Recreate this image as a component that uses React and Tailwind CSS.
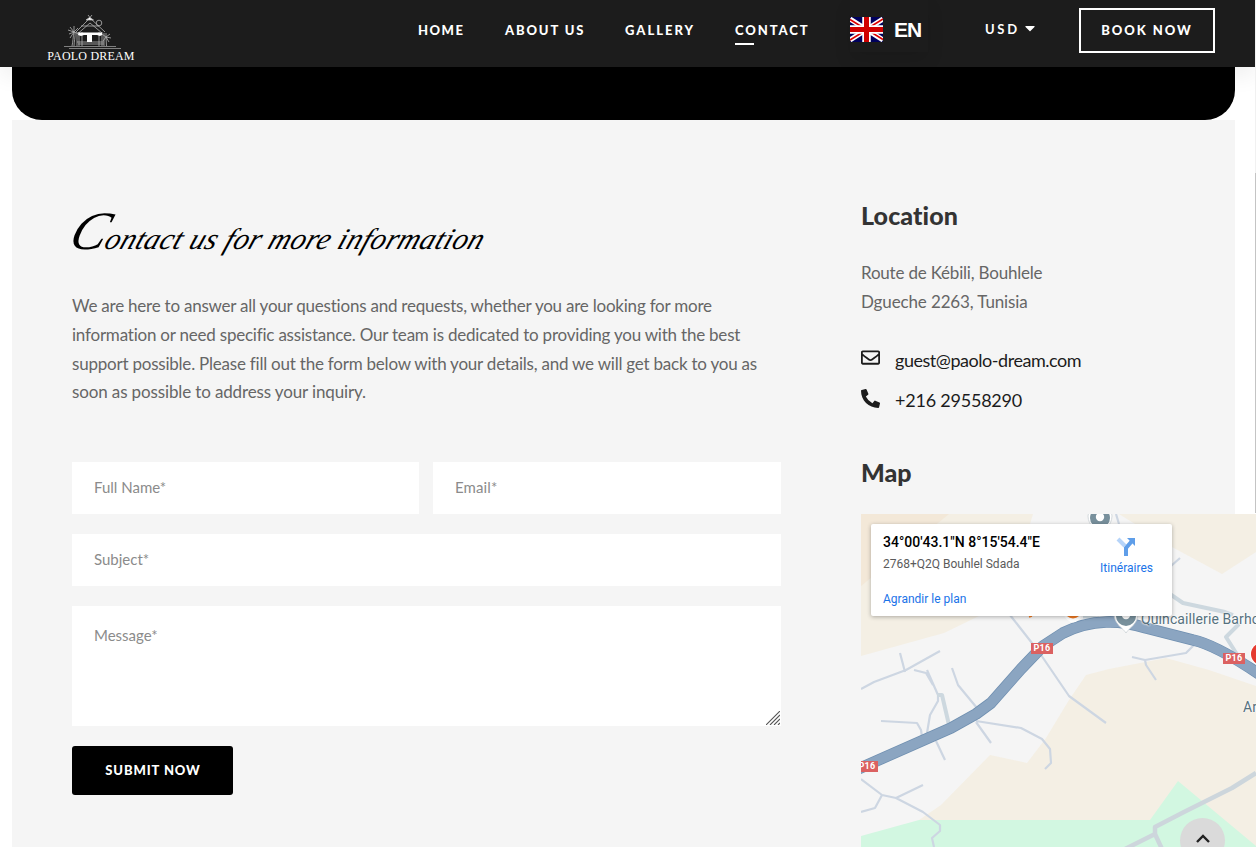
import React from "react";
import { FaRegEnvelope, FaPhoneAlt, FaCaretDown } from "react-icons/fa";

const navItems = [
  { label: "HOME", box: "w-[87px]", track: "tracking-[1.5px]" },
  { label: "ABOUT US", box: "w-[120px]", track: "tracking-[1.85px]" },
  { label: "GALLERY", box: "w-[110px]", track: "tracking-[2px]" },
  { label: "CONTACT", box: "w-[115px]", track: "tracking-[1.9px]", active: true },
];

const intro = [
  { text: "We are here to answer all your questions and requests, whether you are looking for more", track: "tracking-[-0.222px]" },
  { text: "information or need specific assistance. Our team is dedicated to providing you with the best", track: "tracking-[-0.215px]" },
  { text: "support possible. Please fill out the form below with your details, and we will get back to you as", track: "tracking-[-0.22px]" },
  { text: "soon as possible to address your inquiry.", track: "tracking-[-0.13px]" },
];

function Logo() {
  return (
    <div className="ml-[47px] mt-[14px] flex w-[88px] flex-col items-center">
      <svg className="h-[36px] w-[60px]" viewBox="0 0 60 36" fill="none" stroke="#b5b5b5" strokeWidth="0.8">
        <path d="M15 18 L29 4 L44 18 M17.500 19 L29 9 L41 19 M20 12 H38 M27 1 L31 6 M31 1 L27 6" />
        <path d="M25 6 L28.500 3.500 L32.500 6Z" fill="#fff" />
        <circle cx="38" cy="9" r="2.800" />
        <path d="M16 18 V32 M18 18 V32 M21 18 V32 M38 18 V32 M41 18 V32 M43 19 V32 M16 28 H43 M17 30 H43" />
        <path d="M17 18.500 H41 V21 L39 22 L36 21 H31 V28 H26 V21 H23 L20 22 L17 21Z" fill="#fff" stroke="none" />
        <path d="M13 18 C12 23 12 28 11 32 M14 18 C14.500 23 13 28 13 32 M13 18 L7 16 M13 18 L8 20 M13 18 L9 24 M13 18 L13 12 M13 18 L17 14 M13 18 L18 20 M13 18 L9 13" />
        <path d="M45 23 L45.500 32 M45 23 L41 20 M45 23 L49 20 M45 23 L50 24 M45 23 L48 28 M45 23 L42 27 M45 23 L45 19" />
        <path d="M3 32.500 H55 M8 34.500 H60" stroke="#999" />
      </svg>
      <span className="whitespace-nowrap font-['Liberation_Serif',serif] text-[12px] leading-[12px] tracking-[0.2px] text-white">
        PAOLO DREAM
      </span>
    </div>
  );
}

function Flag() {
  return (
    <svg className="h-[25px] w-[33px]" viewBox="0 0 33 25" preserveAspectRatio="none">
      <rect width="33" height="25" fill="#00005c" />
      <path d="M0 2 L33 23 M33 2 L0 23" stroke="#fff" strokeWidth="5" />
      <path d="M0 2.500 L13 10.500 M33 2 L20 10 M0 23 L13 15 M33 22.500 L20 14.500" stroke="#d00" strokeWidth="1.500" />
      <path d="M16.500 0 V25 M0 12.500 H33" stroke="#fff" strokeWidth="8.500" />
      <path d="M16.500 0 V25 M0 12.500 H33" stroke="#d00000" strokeWidth="5" />
    </svg>
  );
}

function Header() {
  return (
    <header className="relative z-10 flex h-[67px] w-full shrink-0 items-start bg-[#1c1c1c] shadow-[0_10px_20px_rgba(0,0,0,0.06)]">
      <Logo />
      <nav className="ml-[283px] flex pt-[20px] font-[Lato,sans-serif] text-[13px] font-black leading-[20px] text-white">
        {navItems.map((item) => (
          <a key={item.label} className={`${item.box} ${item.track} block whitespace-nowrap`}>
            {item.label}
            {item.active && <span className="mt-[3px] block h-[2px] w-[19px] bg-white" />}
          </a>
        ))}
      </nav>
      <div className="flex h-[52px] w-[78px] items-start pt-[17px] shadow-[0_8px_16px_rgba(0,0,0,0.1)]">
        <Flag />
        <span className="ml-[11px] mt-[1px] font-['Liberation_Sans',sans-serif] text-[21px] font-bold leading-[24px] tracking-[-0.9px] text-white">EN</span>
      </div>
      <div className="ml-[57px] mt-[19px] flex items-center font-[Lato,sans-serif] text-[13px] font-bold leading-[20px] tracking-[2.7px] text-white">
        USD
        <FaCaretDown className="-mt-[3px] ml-[2px] size-[16px]" />
      </div>
      <button className="absolute left-[1079px] top-[8px] h-[45px] w-[136px] whitespace-nowrap border-2 border-white font-[Lato,sans-serif] text-[13px] font-black tracking-[1.95px] text-white">
        BOOK NOW
      </button>
    </header>
  );
}

function ContactForm() {
  const field = "block w-full bg-white px-[22px] font-[Lato,sans-serif] text-[15px] placeholder-[#8b8b8b] outline-none";
  return (
    <form className="mt-[55px] flex flex-col">
      <div className="grid grid-cols-[347px_348px] gap-[14px]">
        <input className={`${field} h-[52px] pb-[2px]`} placeholder="Full Name*" />
        <input className={`${field} h-[52px] pb-[2px] tracking-[0.1px]`} placeholder="Email*" />
      </div>
      <input className={`${field} mt-[20px] h-[52px] pb-[2px]`} placeholder="Subject*" />
      <div className="relative mt-[20px]">
        <textarea className={`${field} h-[120px] resize-none py-[18px] leading-[22px]`} placeholder="Message*" />
        <svg className="absolute bottom-px right-px h-[14px] w-[14px]" viewBox="0 0 14 14" stroke="#555" strokeWidth="1.100">
          <path d="M0 14 L14 0 M4 14 L14 4 M8 14 L14 8 M12 14 L14 12" />
        </svg>
      </div>
      <button type="button" className="mt-[20px] h-[49px] w-[161px] rounded-[3px] bg-black pl-px pt-px font-[Lato,sans-serif] text-[13px] font-black tracking-[0.9px] text-white">
        SUBMIT NOW
      </button>
    </form>
  );
}

const minorRoads = [
  "M0 175 L13 168 L45 156 L79 137 M39 139 L44 158 M53 156 L65 159 L72 171 M66 156 L77 181 L77 187 L69 201 L66 219",
  "M91 154 L97 171 L116 194 M20 207 L56 209 L60 216 L61 223 M75 227 L84 246",
  "M115 208 L130 229 M115 207 L160 214 L181 225 L189 235 L190 249 L184 255",
  "M149 101 L178 138 L208 182 L245 209",
  "M0 265 L21 281 L35 284 L62 298 L79 311 L79 317 L71 324 L73 333 M0 298 L14 294 L21 281 M35 284 L62 271",
  "M271 143 L284 146 L325 139 L333 131 M284 146 L285 151 L295 166",
  "M255 0 L258 10 M310 52 L319 44",
];

const route = "M-3 255 L90 214 L115 200 L130 189 L160 155 L182 132 L202 119 Q222 109 245 108 Q262 107 285 114 L332 126 Q355 131 398 160";

function Pin({ x, y }) {
  return (
    <g transform={`translate(${x} ${y})`}>
      <path d="M0 16 C-3 11 -12 7 -12 -3 A12 12 0 0 1 12 -3 C12 7 3 11 0 16Z" fill="#fff" stroke="#c4cbd0" strokeWidth="0.7" />
      <circle cx="0" cy="-1" r="10" fill="#78909c" />
      <circle cx="0" cy="-2" r="4.200" fill="#fff" />
    </g>
  );
}

function MapView() {
  const shield = "absolute flex h-[11px] w-[22px] items-center justify-center bg-[#db6161] text-[9px] font-bold leading-none tracking-[0.3px] text-white";
  return (
    <div className="relative mt-[25px] h-[333px] w-[395px] overflow-hidden bg-[#f5f5f5] font-[Roboto,sans-serif]">
      <svg className="block h-full w-full" viewBox="0 0 395 333" fill="none">
        <path d="M0 0 H172 L160 40 L118 102 L83 119 L0 142Z" fill="#f4efe4" />
        <path d="M0 0 H88 L0 72Z" fill="#f3e8d8" />
        <path d="M258 0 H395 V38 L361 60 L311 33Z" fill="#f4efe4" />
        <path d="M225 161 L248 155 L305 144 L348 156 L395 172 V333 H58 V306 L80 291 L129 241 L166 249 L185 224 L208 186Z" fill="#f4efe4" />
        <path d="M0 322 L58 306 H289 L317 267 L395 332 V333 H0Z" fill="#d2f7e1" />
        <g stroke="#cdd6e2" strokeWidth="2.200" strokeLinejoin="round">
          {minorRoads.map((d) => <path key={d} d={d} />)}
        </g>
        <g stroke="#cdd8df" strokeWidth="4" strokeLinejoin="round">
          <path d="M306 78 L322 89 L364 98 L372 101 M378 110 L365 123 L377 142 M76 181 L81 181 L88 211" />
          <path d="M395 259 L371 274 L323 298 L294 313 L294 320 L264 335 M294 320 L301 335" stroke="#cdd6dc" strokeWidth="4.500" />
          <path d="M222 103 L238 104" strokeWidth="3" />
        </g>
        <path d={route} stroke="#6f8fb0" strokeWidth="11.500" strokeLinejoin="round" />
        <path d={route} stroke="#8ba5c1" strokeWidth="10" strokeLinejoin="round" />
        <path d="M202 100 Q212 117 222 100Z" fill="#fff" />
        <circle cx="212" cy="96" r="8.500" fill="#f57c22" />
        <path d="M168 103 L171 102" stroke="#f57c22" strokeWidth="1.500" />
        <Pin x={239} y={5} />
        <Pin x={265} y={103} />
        <circle cx="401" cy="140" r="12" fill="#fff" />
        <circle cx="401" cy="140" r="11" fill="#e53b30" />
      </svg>
      <span className={`${shield} left-[170px] top-[129px]`}>P16</span>
      <span className={`${shield} left-[362px] top-[139px]`}>P16</span>
      <span className={`${shield} left-[-5px] top-[247px]`}>P16</span>
      <span className="absolute left-[280px] top-[97px] whitespace-nowrap text-[14px] leading-[16px] tracking-[0.1px] text-[#56717e] [text-shadow:0_0_2px_#fff,0_0_2px_#fff]">Quincaillerie Barhoumi</span>
      <span className="absolute left-[382px] top-[185px] whitespace-nowrap text-[14px] leading-[16px] text-[#56717e] [text-shadow:0_0_2px_#fff,0_0_2px_#fff]">Ar</span>
      <div className="absolute left-[10px] top-[10px] flex h-[92px] w-[301px] justify-between rounded-[2px] bg-white pl-[12px] pr-[19px] shadow-[0_1px_4px_rgba(0,0,0,0.3)]">
        <div className="flex flex-col whitespace-nowrap">
          <span className="mt-[10px] text-[14px] font-medium leading-[16px] text-black">34°00'43.1"N 8°15'54.4"E</span>
          <span className="mt-[6px] text-[12px] leading-[16px] text-[#5b5b5b]">2768+Q2Q Bouhlel Sdada</span>
          <a className="mt-[19px] text-[12px] leading-[16px] text-[#1a73e8]">Agrandir le plan</a>
        </div>
        <div className="flex flex-col items-center pt-[13px]">
          <svg className="mr-px h-[20px] w-[20px]" viewBox="0 0 20 20" fill="none">
            <path d="M2 2 L9 9" stroke="#b6d4f9" strokeWidth="4" />
            <path d="M10 19 V11 L16 4" stroke="#5f9ee9" strokeWidth="4" />
            <path d="M11 1 H19 V9Z" fill="#5f9ee9" />
          </svg>
          <a className="mt-[3px] text-[12px] leading-[16px] text-[#1a73e8]">Itinéraires</a>
        </div>
      </div>
      <button className="absolute left-[319px] top-[304px] flex h-[45px] w-[45px] justify-center rounded-full bg-[#dadada] pt-[16px]">
        <svg className="h-[9px] w-[14px]" viewBox="0 0 14 9" fill="none" stroke="#222" strokeWidth="2.400">
          <path d="M1 8 L7 2 L13 8" />
        </svg>
      </button>
    </div>
  );
}

function Sidebar() {
  return (
    <aside className="ml-[80px] w-[395px] shrink-0 pt-[78px] font-[Lato,sans-serif]">
      <h3 className="text-[25px] font-black leading-[34px] tracking-[0.1px] text-[#333]">Location</h3>
      <p className="mt-[26px] text-[17px] leading-[29px] text-[#666]">
        <span className="block tracking-[-0.2px]">Route de Kébili, Bouhlele</span>
        <span className="block tracking-[-0.13px]">Dgueche 2263, Tunisia</span>
      </p>
      <div className="mt-[25px] flex h-[40px] items-center text-[18px] leading-[26px] text-[#1c1c1c]">
        <FaRegEnvelope className="mb-[7px] size-[19px]" />
        <span className="-mt-[2px] ml-[15px] tracking-[-0.46px]">guest@paolo-dream.com</span>
      </div>
      <div className="flex h-[40px] items-center text-[18px] leading-[26px] text-[#1c1c1c]">
        <FaPhoneAlt className="mb-[5px] size-[19px]" />
        <span className="-mt-[2px] ml-[15px] tracking-[-0.22px]">+216 29558290</span>
      </div>
      <h3 className="mt-[34px] text-[25px] font-black leading-[34px] text-[#333]">Map</h3>
      <MapView />
    </aside>
  );
}

export default function App() {
  return (
    <div className="relative flex h-[847px] w-[1256px] flex-col overflow-hidden bg-white">
      <Header />
      <div className="ml-[12px] h-[53px] w-[1223px] shrink-0 rounded-b-[30px] bg-black" />
      <main className="ml-[12px] flex h-[727px] w-[1223px] shrink-0 bg-[#f5f5f5] pl-[60px]">
        <section className="w-[709px] shrink-0 pt-[84px]">
          <h2 className="h-[60px] origin-left -skew-x-[20deg] whitespace-nowrap font-['Liberation_Serif',serif] text-[30px] italic leading-[60px] tracking-[0.3px] text-black">
            <span className="text-[54px] leading-none">C</span>ontact us for more information
          </h2>
          <p className="mt-[28px] font-[Lato,sans-serif] text-[17px] leading-[28.8px] text-[#666]">
            {intro.map((line) => (
              <span key={line.text} className={`${line.track} block whitespace-nowrap`}>{line.text}</span>
            ))}
          </p>
          <ContactForm />
        </section>
        <Sidebar />
      </main>
      <div className="absolute right-0 top-[173px] h-[340px] w-px bg-[#c4c4c4]" />
      <div className="absolute right-0 top-0 z-20 h-[173px] w-px bg-[#f1f1f1]" />
    </div>
  );
}
